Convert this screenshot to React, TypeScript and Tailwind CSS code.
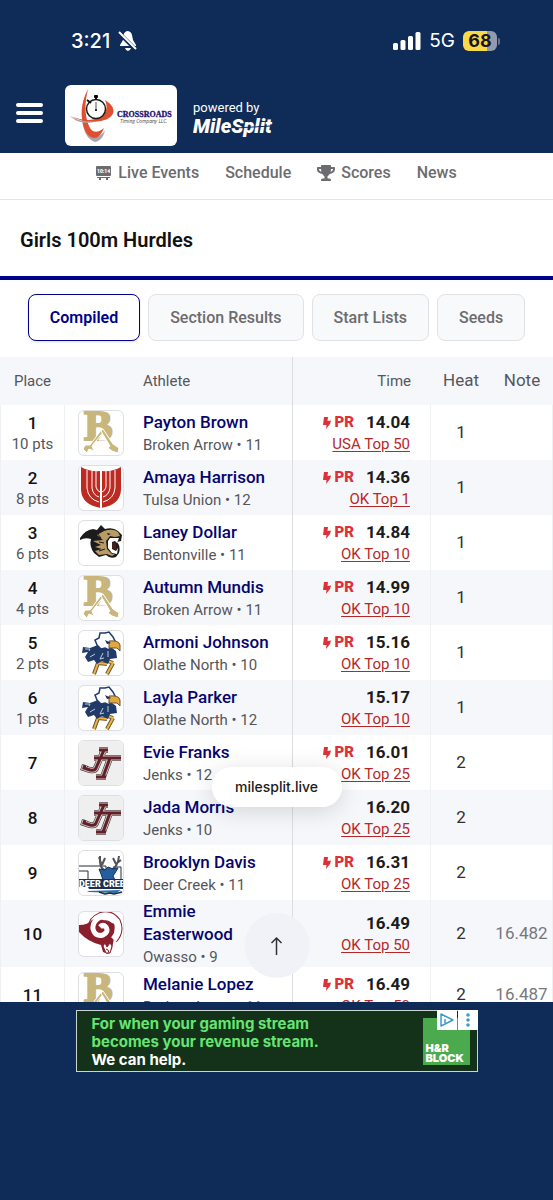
import { useState } from 'react';
import { FaTrophy } from 'react-icons/fa';

type School = 'brokenArrow' | 'union' | 'bentonville' | 'olathe' | 'jenks' | 'deerCreek' | 'owasso';

interface Result {
  place: number;
  points?: number;
  name: string;
  school: School;
  grade: number;
  time: string;
  pr: boolean;
  rank: string;
  heat: number;
  note?: string;
}

const schoolNames: Record<School, string> = {
  brokenArrow: 'Broken Arrow',
  union: 'Tulsa Union',
  bentonville: 'Bentonville',
  olathe: 'Olathe North',
  jenks: 'Jenks',
  deerCreek: 'Deer Creek',
  owasso: 'Owasso',
};

const results: Result[] = [
  { place: 1, points: 10, name: 'Payton Brown', school: 'brokenArrow', grade: 11, time: '14.04', pr: true, rank: 'USA Top 50', heat: 1 },
  { place: 2, points: 8, name: 'Amaya Harrison', school: 'union', grade: 12, time: '14.36', pr: true, rank: 'OK Top 1', heat: 1 },
  { place: 3, points: 6, name: 'Laney Dollar', school: 'bentonville', grade: 11, time: '14.84', pr: true, rank: 'OK Top 10', heat: 1 },
  { place: 4, points: 4, name: 'Autumn Mundis', school: 'brokenArrow', grade: 11, time: '14.99', pr: true, rank: 'OK Top 10', heat: 1 },
  { place: 5, points: 2, name: 'Armoni Johnson', school: 'olathe', grade: 10, time: '15.16', pr: true, rank: 'OK Top 10', heat: 1 },
  { place: 6, points: 1, name: 'Layla Parker', school: 'olathe', grade: 12, time: '15.17', pr: false, rank: 'OK Top 10', heat: 1 },
  { place: 7, name: 'Evie Franks', school: 'jenks', grade: 12, time: '16.01', pr: true, rank: 'OK Top 25', heat: 2 },
  { place: 8, name: 'Jada Morris', school: 'jenks', grade: 10, time: '16.20', pr: false, rank: 'OK Top 25', heat: 2 },
  { place: 9, name: 'Brooklyn Davis', school: 'deerCreek', grade: 11, time: '16.31', pr: true, rank: 'OK Top 25', heat: 2 },
  { place: 10, name: 'Emmie Easterwood', school: 'owasso', grade: 9, time: '16.49', pr: false, rank: 'OK Top 50', heat: 2, note: '16.482' },
  { place: 11, name: 'Melanie Lopez', school: 'brokenArrow', grade: 11, time: '16.49', pr: true, rank: 'OK Top 50', heat: 2, note: '16.487' },
];

const tabs = ['Compiled', 'Section Results', 'Start Lists', 'Seeds'];

const jenksLetters = 'M20 9H29M25 9L17 27Q16 30 11 29L5 27L6 24M15 17H42M31 17L24 36M17 36H27';
const ramHorn = 'M34 27Q41 19 37 10Q31 2 22 5Q13 9 14 17Q16 25 24 23Q30 20 27 15Q24 12 21 15';

const SchoolLogo = ({ school }: { school: School }) => {
  switch (school) {
    case 'brokenArrow':
      return (
        <svg viewBox="0 0 44 44" className="size-full" fill="#c9b67c">
          <text x="5" y="29" fontFamily="Liberation Serif, serif" fontWeight="700" fontSize="43" stroke="#c9b67c" strokeWidth="2">B</text>
          <path d="M20 29 24 22 28 29Z" fill="#fff" stroke="#fff" />
          <path d="M23 18 25 20 13 35 15 40 10 38 8 42 4 38 6 34 11 34Z" stroke="#fff" strokeWidth="1" />
          <path d="M22 20 24 18 34 33 40 37 39 42 33 40 29 37 31 35Z" stroke="#fff" strokeWidth="1" />
        </svg>
      );
    case 'union':
      return (
        <svg viewBox="0 0 44 44" className="size-full">
          <path d="M2 1Q10 6 22 5Q34 6 42 1V24Q41 39 22 42Q3 39 2 24Z" fill="#bd2a22" />
          <g fill="none" stroke="#fff" strokeWidth="1">
            <path d="M22 5V42" strokeWidth="2" />
            <path d="M8 4V22Q9 33 20 36M36 4V22Q35 33 24 36" />
            <path d="M13 5V22Q14 29 20 31M31 5V22Q30 29 24 31" />
            <path d="M17 5V21Q18 25 21 26M27 5V21Q26 25 23 26" />
          </g>
        </svg>
      );
    case 'bentonville':
      return (
        <svg viewBox="0 0 44 44" className="size-full">
          <path d="M1 17Q6 9 14 8L18 9 22 4 26 8Q34 6 39 10L43 14 42 20 38 21Q42 26 40 32L37 36Q31 38 27 34L20 36 15 32Q10 25 12 18Q6 16 1 19Z" fill="#1d1c1c" />
          <path d="M25 10Q34 7 39 11L41 15 36 16 31 15 27 20 28 28 33 33 36 33 33 35 28 33 20 34 16 30 23 28 16 26 22 24 14 20 24 19 18 14Z" fill="#b99b65" />
          <path d="M31 17 40 17 38 22 36 20 33 21 33 28 37 30 39 27 38 33 33 32 29 27 29 20Z" fill="#fff" />
          <path d="M33 21 37 22 37 29 33 27Z" fill="#4a1d1a" />
          <path d="m28 12 4 1-3 1z" fill="#111" />
          <path d="M18 12l4 5-5-1M20 21l5 1M20 30l6-2" stroke="#1d1c1c" strokeWidth="1" fill="none" />
        </svg>
      );
    case 'olathe':
      return (
        <svg viewBox="0 0 44 44" className="size-full">
          <path d="M19 32 15 43M34 32 28 43M19 32 28 33M34 32 29 30" stroke="#6c5830" strokeWidth="4" fill="none" />
          <path d="M19 32 15 43M34 32 28 43M19 32 28 33M34 32 29 30" stroke="#eab34a" strokeWidth="2" fill="none" />
          <path d="M19 14 11 17 4 16 3 22 9 21 6 26 9 31 15 29 18 33 23 30 29 33 31 28 38 27 37 20 33 17Z" fill="#203b69" />
          <path d="M6 18h5l-1 2M11 26l5-3M24 22l-3 6 4-1M29 20v6" stroke="#c0cbdb" strokeWidth="1" fill="none" />
          <path d="M18 14 16 9 20 7 21 2 26 2 30 1 34 6 36 10 31 16 30 19 26 17 22 18Z" fill="#fff" stroke="#203b69" strokeWidth="1.500" />
          <path d="M30 10Q40 9 41 14L41 20 38 17 30 17Z" fill="#e5a63a" stroke="#5f5742" strokeWidth="1" />
          <path d="m26 9 6 3-4 1z" fill="#182c49" />
        </svg>
      );
    case 'jenks':
      return (
        <svg viewBox="0 0 44 44" className="size-full" fill="none">
          <rect width="44" height="44" fill="#efefef" />
          <path d={jenksLetters} stroke="#2a2426" strokeWidth="6" />
          <path d={jenksLetters} stroke="#cfc6c4" strokeWidth="5" />
          <path d={jenksLetters} stroke="#642027" strokeWidth="3" />
        </svg>
      );
    case 'deerCreek':
      return (
        <svg viewBox="0 0 44 44" className="size-full">
          <path d="M0 15H27V30H9V20H0M34 16H42V38" fill="none" stroke="#222c3a" strokeWidth="1" />
          <path d="M27 20Q20 18 21 5M22 12l-2-6M23 14l3-7M32 19Q39 16 40 5M37 13l-3-6M38 12l4-3" stroke="#53515c" strokeWidth="2" fill="none" />
          <path d="m20 18 6 1 3-3 5 2 5-1-3 5-2 3 5 10-14-3-3-9Z" fill="#285d9c" stroke="#14355d" />
          <path d="M0 28h44v10H10l-1-2H0Z" fill="#1c2f52" />
          <text x="0" y="36" fontFamily="Roboto, sans-serif" fontSize="9" fontWeight="900" fill="#fff">DEER CREEK</text>
          <path d="m8 40 34-1-5 3-27-1Z" fill="#2d6da6" />
          <path d="m20 41 6 2 5-1 4 1 8-2" fill="none" stroke="#172c42" strokeWidth="1.500" />
        </svg>
      );
    case 'owasso':
      return (
        <svg viewBox="0 0 44 44" className="size-full" fill="none">
          <path d={ramHorn} stroke="#8b1f2d" strokeWidth="10" />
          <path d={ramHorn} stroke="#fff" strokeWidth="8" />
          <path d="M0 13Q9 13 13 8L18 6 36 12 35 26 33 37 29 42 24 40 22 33Q9 30 0 20Z" fill="#8b1f2d" />
          <path d={ramHorn} stroke="#fff" strokeWidth="5" />
          <path d="m24 34 2-3 2 4 3-4 2 3-2 7h-4Z" fill="#fff" stroke="#8b1f2d" />
          <path d="m27 37 2 1 1 3M17 29l5 2" stroke="#8b1f2d" />
        </svg>
      );
  }
};

const StatusBar = () => (
  <div className="flex h-[82px] items-center justify-between pl-[71px] pr-[53px] font-['Inter',sans-serif]">
    <div className="flex items-center gap-2 text-[20px] leading-6 font-medium">
      <span>3:21</span>
      <svg viewBox="0 0 20 20" className="size-5" fill="currentColor">
        <path d="M9 0Q13 0 14 4L15 9L18 14V15H2V14L5 9V5Q6 1 9 0ZM7 17h6q-1 3-3 3t-3-3Z" />
        <path d="m0 1 18 18" stroke="#0f2b57" strokeWidth="4" />
        <path d="m1 1 17 17" stroke="currentColor" strokeWidth="2" />
      </svg>
    </div>
    <div className="flex items-center gap-2">
      <svg viewBox="0 0 28 18" className="h-[18px] w-7" fill="currentColor">
        <rect y="11" width="5" height="7" rx="1.500" />
        <rect x="7.500" y="8" width="5" height="10" rx="1.500" />
        <rect x="15" y="4" width="5" height="14" rx="1.500" />
        <rect x="22.500" width="5" height="18" rx="1.500" />
      </svg>
      <span className="text-[19px] leading-6">5G</span>
      <div className="flex items-center gap-px">
        <div className="flex h-5 w-[34px] items-center justify-center rounded-md bg-linear-to-r from-[#f8d94a] from-70% to-[#929aad] to-70% text-[18px] leading-5 font-bold text-[#171717]">
          68
        </div>
        <span className="h-[7px] w-0.5 rounded-r bg-[#66738f]" />
      </div>
    </div>
  </div>
);

const SponsorLogo = () => (
  <svg viewBox="0 0 112 61" className="h-[61px] w-28 rounded-md bg-white" role="img" aria-label="Crossroads Timing Company LLC.">
    <path d="M24 4C13 23 15 52 30 57C36 56 39 50 40 46C35 51 31 54 27 49C18 37 17 18 24 4Z" fill="#aaa4af" />
    <path d="M23 4C15 19 16 31 18 39C20 47 23 52 29 53C34 53 37 48 39 43C34 47 29 49 25 43C20 34 19 19 23 4Z" fill="#df5030" />
    <path d="M5 31C16 38 29 37 40 35C52 31 50 22 41 16C50 25 44 33 32 36C21 40 11 37 5 31Z" fill="#aaa4af" />
    <path d="M5 31C16 36 25 38 36 36C54 31 50 21 40 15C43 22 42 28 35 32C26 37 15 35 5 31Z" fill="#df5030" />
    <circle cx="31" cy="24" r="9.500" fill="#fff" stroke="#1d1d1d" strokeWidth="1.500" />
    <path d="M31 17v9" stroke="#555" strokeWidth="1" />
    <circle cx="31" cy="25" r="1" />
    <path d="M31 10v5M22 15l4 3" stroke="#111" strokeWidth="2" />
    <rect x="29" y="10" width="4" height="3" rx="1" />
    <text x="52" y="32" fontFamily="Liberation Serif, serif" fontSize="8" fontWeight="700" fill="#25106c" stroke="#25106c" strokeWidth=".3">CROSSROADS</text>
    <text x="55" y="38" fontFamily="Open Sans, sans-serif" fontSize="5" fontStyle="italic" fill="#444">Timing Company LLC.</text>
  </svg>
);

const Header = () => (
  <header className="bg-[#0f2b57] text-white">
    <StatusBar />
    <div className="flex h-[71px] items-start pt-[3px] pl-4">
      <button aria-label="Menu" className="mt-[18px] flex w-[27px] flex-col gap-1">
        <span className="h-1 rounded-full bg-white" />
        <span className="h-1 rounded-full bg-white" />
        <span className="h-1 rounded-full bg-white" />
      </button>
      <a href="#home" className="ml-[22px]">
        <SponsorLogo />
      </a>
      <div className="ml-4 pt-[15px]">
        <p className="text-[13px] leading-4">powered by</p>
        <svg viewBox="0 0 90 28" className="h-7 w-[90px]" role="img" aria-label="MileSplit">
          <text x="0" y="17" fontFamily="Roboto, sans-serif" fontSize="20" fontWeight="900" fontStyle="italic" fill="#fff">MileSplit</text>
          <path d="M42 12 78 10" stroke="#0f2b57" strokeWidth="1" />
        </svg>
      </div>
    </div>
  </header>
);

const Nav = () => (
  <nav className="flex h-[47px] items-start justify-center gap-[26px] border-b border-[#e3e4e6] pt-2 text-base leading-6 font-medium text-[#6c6c70]">
    <a href="#live" className="flex items-center gap-[7px]">
      <svg viewBox="0 0 15 14" className="h-3.5 w-[15px]" fill="currentColor">
        <path d="M1 0h13q1 0 1 1v8q0 1-1 1H1q-1 0-1-1V1q0-1 1-1ZM1 11h13v1h-2v2h-2v-2H5v2H3v-2H1Z" />
        <text x="1" y="7" fontFamily="Roboto, sans-serif" fontSize="5" fontWeight="900" fill="#fff">10:14</text>
      </svg>
      Live Events
    </a>
    <a href="#schedule">Schedule</a>
    <a href="#scores" className="flex items-center gap-1.5">
      <FaTrophy className="h-4 w-[18px]" />
      Scores
    </a>
    <a href="#news">News</a>
  </nav>
);

const ResultRow = ({ result }: { result: Result }) => (
  <tr className="h-[55px] odd:bg-white even:bg-[#f6f7fa]">
    <td className="border-x border-[#eff0f2] p-0 text-center">
      <div className="text-[17px] leading-[22px] font-medium text-[#111114]">{result.place}</div>
      {result.points && <div className="text-[15px] leading-5 text-[#55565c]">{result.points} pts</div>}
    </td>
    <td className="p-0 pl-[13px]">
      <div className="size-[46px] overflow-hidden rounded-md border border-[#dedfe3] bg-white">
        <SchoolLogo school={result.school} />
      </div>
    </td>
    <td className="border-r border-[#dcdde1] p-0 pr-4">
      <a href="#athlete" className="block text-[17px] leading-[23px] font-medium text-[#05056f]">
        {result.name}
      </a>
      <div className="mt-px text-[15px] leading-5 text-[#55565c]">
        {schoolNames[result.school]} • {result.grade}
      </div>
    </td>
    <td className="border-r border-[#eff0f2] p-0 pr-5 text-right">
      <div className="flex items-center justify-end leading-[23px]">
        {result.pr && (
          <span className="mr-3 flex items-center gap-[3px] text-[15px] font-black text-[#df3039]">
            <svg viewBox="0 0 8 12" className="h-3 w-2" fill="currentColor">
              <path d="M1 0H5L4.500 4 8 3.500 7 7 3 12 3.500 8H0Z" />
            </svg>
            PR
          </span>
        )}
        <span className="text-[17px] font-bold text-[#1b1c20]">{result.time}</span>
      </div>
      <a href="#rankings" className="block text-[15px] leading-5 text-[#b92626] underline underline-offset-2">
        {result.rank}
      </a>
    </td>
    <td className="p-0 text-center text-[17px] text-[#303136]">{result.heat}</td>
    <td className="border-r border-[#eff0f2] p-0 text-center text-[17px] text-[#77787d]">{result.note}</td>
  </tr>
);

const ResultsTable = () => (
  <table className="w-full table-fixed border-separate border-spacing-0">
    <colgroup>
      <col className="w-[65px]" />
      <col className="w-[78px]" />
      <col />
      <col className="w-[138px]" />
      <col className="w-[60px]" />
      <col className="w-[62px]" />
    </colgroup>
    <thead className="bg-[#f6f7fa] text-[15px] text-[#55565c]">
      <tr className="h-12">
        <th className="p-0 font-normal">Place</th>
        <th className="p-0" />
        <th className="border-r border-[#dcdde1] p-0 text-left font-normal">Athlete</th>
        <th className="p-0 pr-5 text-right font-normal">Time</th>
        <th className="p-0 text-[17px] font-normal">Heat</th>
        <th className="p-0 text-[17px] font-normal">Note</th>
      </tr>
    </thead>
    <tbody>
      {results.map(result => (
        <ResultRow key={result.place} result={result} />
      ))}
    </tbody>
  </table>
);

const AdBanner = () => (
  <a href="#ad" className="relative flex h-[62px] w-[402px] items-start justify-between border border-[#c9d6cd] bg-[#143219] pt-1 pl-[15px] font-['Inter',sans-serif]">
    <p className="text-[15px] leading-[18px] font-bold text-[#65e572]">
      For when your gaming stream
      <br />
      becomes your revenue stream.
      <br />
      <span className="text-white">We can help.</span>
    </p>
    <div className="mt-[3px] mr-[7px] flex size-[47px] flex-col justify-end bg-[#4caa4e] pb-0.5 pl-[3px] text-[11px] leading-[10px] font-black text-white">
      <span>H&amp;R</span>
      <span>BLOCK</span>
    </div>
    <div className="absolute -top-px -right-px flex gap-px">
      <svg viewBox="0 0 20 20" className="size-5 bg-white" fill="none" stroke="#3b9dc9">
        <path d="M4 4v12l12-6Z" strokeWidth="1.500" strokeLinejoin="round" />
        <path d="M8 9v4M8 6v1" strokeWidth="1.500" />
      </svg>
      <svg viewBox="0 0 20 20" className="size-5 bg-white" fill="#3b9dc9">
        <circle cx="10" cy="5" r="1.800" />
        <circle cx="10" cy="10" r="1.800" />
        <circle cx="10" cy="15" r="1.800" />
      </svg>
    </div>
  </a>
);

export default function App() {
  const [activeTab, setActiveTab] = useState('Compiled');

  return (
    <div className="flex h-screen flex-col bg-[#0f2b57] font-['Roboto',sans-serif]">
      <Header />
      <main className="relative min-h-0 flex-1 overflow-hidden bg-white">
        <Nav />
        <h1 className="border-b-4 border-[#00008b] px-5 pt-6 pb-5 text-xl leading-8 font-semibold text-[#111114]">
          Girls 100m Hurdles
        </h1>
        <div className="flex justify-center gap-2 pt-[14px] pb-4">
          {tabs.map(tab => (
            <button
              key={tab}
              onClick={() => setActiveTab(tab)}
              className={
                tab === activeTab
                  ? 'h-[47px] rounded-lg border border-[#00008b] bg-white px-[21px] text-base font-semibold text-[#00008b] shadow-sm'
                  : 'h-[47px] rounded-lg border border-[#e1e2e5] bg-[#f8f9fb] px-[21px] text-base font-medium text-[#6c6c70]'
              }
            >
              {tab}
            </button>
          ))}
        </div>
        <ResultsTable />

        {/* Address pill and scroll-to-top float over the table */}
        <div className="absolute bottom-[195px] left-1/2 flex h-10 w-[130px] -translate-x-1/2 items-center justify-center rounded-full bg-white/95 font-['Inter',sans-serif] text-sm font-medium text-[#1b1c20] shadow-[0_4px_24px_rgba(0,0,0,0.14)]">
          milesplit.live
        </div>
        <button
          aria-label="Back to top"
          className="absolute bottom-6 left-1/2 flex size-[65px] -translate-x-1/2 items-center justify-center rounded-full bg-[#f0f1f7]/95"
        >
          <svg viewBox="0 0 12 20" className="h-5 w-3" fill="none" stroke="#303136" strokeWidth="1.500">
            <path d="M6 19V2M1 7l5-5 5 5" />
          </svg>
        </button>
      </main>
      <footer className="flex h-[198px] shrink-0 items-start justify-center pt-2">
        <AdBanner />
      </footer>
    </div>
  );
}
